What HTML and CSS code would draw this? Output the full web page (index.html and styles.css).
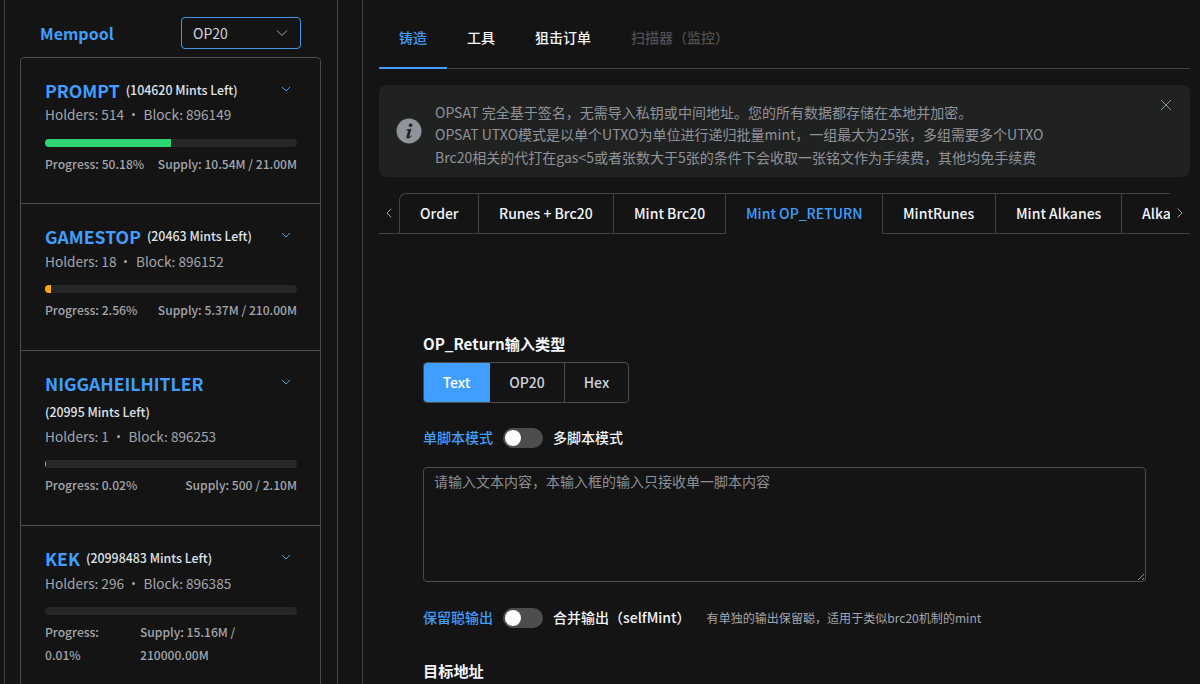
FILE: index.html
```html
<!DOCTYPE html>
<html lang="zh-CN">
<head>
  <meta charset="UTF-8">
  <meta name="viewport" content="width=device-width, initial-scale=1.0">
  <title>OPSAT</title>
  <link rel="stylesheet" href="styles.css">
</head>
<body>
  <aside class="sidebar">
    <div class="sidebar-header">
      <h1>Mempool</h1>
      <div class="select">
        <span>OP20</span>
        <svg class="select-arrow" width="12" height="12" viewBox="0 0 12 12"><path d="M1 3.5 L6 8.5 L11 3.5"/></svg>
      </div>
    </div>

    <div class="token-list">
      <div class="token">
        <div class="token-title">
          <div class="token-names"><span class="token-name">PROMPT</span><span class="mints">(104620 Mints Left)</span></div>
          <svg class="arrow" width="10" height="10" viewBox="0 0 10 10"><path d="M1 3 L5 7 L9 3"/></svg>
        </div>
        <div class="token-info"><span>Holders: 514</span><span class="dot"></span><span>Block: 896149</span></div>
        <div class="progress"><div class="bar green" style="width: 50.18%"></div></div>
        <div class="token-stats"><span>Progress: 50.18%</span><span>Supply: 10.54M / 21.00M</span></div>
      </div>

      <div class="token">
        <div class="token-title">
          <div class="token-names"><span class="token-name">GAMESTOP</span><span class="mints">(20463 Mints Left)</span></div>
          <svg class="arrow" width="10" height="10" viewBox="0 0 10 10"><path d="M1 3 L5 7 L9 3"/></svg>
        </div>
        <div class="token-info"><span>Holders: 18</span><span class="dot"></span><span>Block: 896152</span></div>
        <div class="progress"><div class="bar" style="width: 2.56%"></div></div>
        <div class="token-stats"><span>Progress: 2.56%</span><span>Supply: 5.37M / 210.00M</span></div>
      </div>

      <div class="token">
        <div class="token-title">
          <div class="token-names"><span class="token-name">NIGGAHEILHITLER</span><span class="mints">(20995 Mints Left)</span></div>
          <svg class="arrow" width="10" height="10" viewBox="0 0 10 10"><path d="M1 3 L5 7 L9 3"/></svg>
        </div>
        <div class="token-info"><span>Holders: 1</span><span class="dot"></span><span>Block: 896253</span></div>
        <div class="progress"><div class="bar" style="width: 0.2%"></div></div>
        <div class="token-stats"><span>Progress: 0.02%</span><span>Supply: 500 / 2.10M</span></div>
      </div>

      <div class="token">
        <div class="token-title">
          <div class="token-names"><span class="token-name">KEK</span><span class="mints">(20998483 Mints Left)</span></div>
          <svg class="arrow" width="10" height="10" viewBox="0 0 10 10"><path d="M1 3 L5 7 L9 3"/></svg>
        </div>
        <div class="token-info"><span>Holders: 296</span><span class="dot"></span><span>Block: 896385</span></div>
        <div class="progress"><div class="bar" style="width: 0.01%"></div></div>
        <div class="token-stats wrapped"><span>Progress: 0.01%</span><span>Supply: 15.16M / 210000.00M</span></div>
      </div>
    </div>
  </aside>

  <main class="main">
    <nav class="menu">
      <a class="menu-item active">铸造</a>
      <a class="menu-item">工具</a>
      <a class="menu-item">狙击订单</a>
      <a class="menu-item disabled">扫描器（监控）</a>
    </nav>

    <div class="alert">
      <svg class="alert-icon" width="26" height="26" viewBox="0 0 26 26">
        <circle cx="13" cy="13" r="12.5" fill="#909399"/>
        <circle cx="14.6" cy="7.2" r="1.8" fill="#202121"/>
        <path d="M10.3 11.4 L15.4 10.8 L13.4 18 Q13.2 19 14 18.6 L15.4 17.5 L15.8 18 Q13.6 20.6 11.6 20.5 Q10 20.3 10.5 18.4 L12.1 12.7 L10.2 12.2 Z" fill="#202121"/>
      </svg>
      <div class="alert-text">
        <p>OPSAT 完全基于签名，无需导入私钥或中间地址。您的所有数据都存储在本地并加密。</p>
        <p>OPSAT UTXO模式是以单个UTXO为单位进行递归批量mint，一组最大为25张，多组需要多个UTXO</p>
        <p>Brc20相关的代打在gas&lt;5或者张数大于5张的条件下会收取一张铭文作为手续费，其他均免手续费</p>
      </div>
      <svg class="alert-close" width="12" height="12" viewBox="0 0 12 12"><path d="M1 1 L11 11 M11 1 L1 11"/></svg>
    </div>

    <div class="tabs">
      <div class="tab-nav prev"><svg width="6" height="10" viewBox="0 0 6 10"><path d="M5.3 0.7 L1 5 L5.3 9.3"/></svg></div>
      <div class="tab-list">
        <div class="tab w-order">Order</div>
        <div class="tab w-runes">Runes + Brc20</div>
        <div class="tab w-brc">Mint Brc20</div>
        <div class="tab w-op active">Mint OP_RETURN</div>
        <div class="tab w-mint">MintRunes</div>
        <div class="tab w-alk">Mint Alkanes</div>
        <div class="tab w-last">Alka</div>
      </div>
      <div class="tab-nav next"><svg width="6" height="10" viewBox="0 0 6 10"><path d="M0.7 0.7 L5 5 L0.7 9.3"/></svg></div>
    </div>

    <form class="form">
      <label class="form-label">OP_Return输入类型</label>
      <div class="radio-group">
        <div class="radio r-text active">Text</div>
        <div class="radio r-op">OP20</div>
        <div class="radio r-hex">Hex</div>
      </div>

      <div class="switch-row">
        <span class="switch-label active">单脚本模式</span>
        <span class="switch"></span>
        <span class="switch-label">多脚本模式</span>
      </div>

      <textarea class="textarea" placeholder="请输入文本内容，本输入框的输入只接收单一脚本内容"></textarea>

      <div class="switch-row second">
        <span class="switch-label active">保留聪输出</span>
        <span class="switch"></span>
        <span class="switch-label">合并输出（selfMint）</span>
        <span class="hint">有单独的输出保留聪，适用于类似brc20机制的mint</span>
      </div>

      <label class="form-label address">目标地址</label>
    </form>
  </main>
</body>
</html>
```
FILE: styles.css
```css
* {
  margin: 0;
  padding: 0;
  box-sizing: border-box;
}

body {
  font-family: "Noto Sans CJK SC", sans-serif;
  font-size: 14px;
  color: #f2f5fa;
  background-color: #141414;
  display: flex;
  height: 684px;
  overflow: hidden;
}

svg {
  display: block;
  flex-shrink: 0;
  fill: none;
}

/* Sidebar */
.sidebar {
  width: 334px;
  height: 684px;
  margin-left: 4px;
  padding: 17px 17px 0 15px;
  border-left: 1px solid #414243;
  border-right: 1px solid #414243;
  flex-shrink: 0;
  overflow: hidden;
}

.sidebar-header {
  display: flex;
  justify-content: space-between;
  align-items: center;
  height: 32px;
  padding: 0 19px 0 20px;
  margin-bottom: 8px;
}

.sidebar-header h1 {
  font-size: 16px;
  font-weight: 700;
  line-height: 32px;
  color: #409eff;
}

.select {
  display: flex;
  justify-content: space-between;
  align-items: center;
  width: 120px;
  height: 32px;
  padding: 0 12px 0 11px;
  border: 1px solid #4596ea;
  border-radius: 4px;
  line-height: 30px;
  color: #cfd3dc;
}

.select-arrow path {
  stroke: #a3a6ad;
}

.token-list {
  width: 301px;
  border: 1px solid #4c4d4f;
  border-radius: 4px 4px 0 0;
}

.token {
  padding: 18px 23px 28.4px 24px;
  border-bottom: 1px solid #4c4d4f;
}

.token-title {
  display: flex;
  justify-content: space-between;
}

.token-names {
  display: flex;
  flex-wrap: wrap;
  column-gap: 6px;
  width: 220px;
}

.token-name,
.mints {
  line-height: 29.2px;
}

.token-name {
  font-size: 17.6px;
  font-weight: 700;
  color: #409eff;
}

.mints {
  font-size: 12.4px;
  font-weight: 500;
  color: #dfe2e8;
}

.arrow {
  margin: 8px 6px 0 0;
}

.arrow path {
  stroke: #409eff;
}

.token-info {
  display: flex;
  align-items: center;
  height: 19px;
  font-size: 13.6px;
  line-height: 19px;
  color: #a3a6ad;
}

.dot {
  width: 3px;
  height: 3px;
  margin: 0 8.5px 0 8px;
  border-radius: 50%;
  background-color: #a3a6ad;
}

.progress {
  height: 8px;
  margin-top: 14.3px;
  border-radius: 4px;
  background-color: #262727;
  overflow: hidden;
}

.bar {
  height: 100%;
  background-color: #faa613;
}

.bar.green {
  background-color: #2ed573;
}

.token-stats {
  display: flex;
  justify-content: space-between;
  margin-top: 5px;
  font-size: 12.1px;
  font-weight: 500;
  line-height: 23.5px;
  color: #a3a6ad;
}

.token-stats.wrapped {
  display: grid;
  grid-template-columns: 95px 110px;
  justify-content: start;
}

.token-stats.wrapped span:first-child {
  width: 60px;
}

/* Main panel */
.main {
  flex: 1;
  height: 684px;
  margin-left: 24px;
  padding: 8px 10px 0 16px;
  border-left: 1px solid #414243;
  overflow: hidden;
}

.menu {
  display: flex;
  height: 61px;
  border-bottom: 1px solid #414243;
}

.menu-item {
  height: 61px;
  padding: 0 20px;
  line-height: 58px;
  font-weight: 500;
}

.menu-item.active {
  color: #409eff;
  border-bottom: 2px solid #409eff;
}

.menu-item.disabled {
  color: #4f5053;
}

.alert {
  display: flex;
  align-items: center;
  height: 92px;
  margin-top: 16px;
  padding: 0 18px 0 17px;
  border-radius: 8px;
  background-color: #202121;
}

.alert-text {
  flex: 1;
  margin-left: 13px;
  padding-top: 7px;
  font-size: 14.03px;
  line-height: 22.4px;
  color: #909399;
  white-space: nowrap;
}

.alert-close {
  align-self: flex-start;
  margin-top: 14px;
}

.alert-close path {
  stroke: #909399;
}

.tabs {
  display: flex;
  height: 41px;
  margin-top: 16px;
}

.tab-nav {
  display: flex;
  align-items: center;
  justify-content: center;
  width: 20px;
  border-bottom: 1px solid #414243;
}

.tab-nav path {
  stroke: #a3a6ad;
}

.tab-list {
  flex: 1;
  min-width: 0;
  display: flex;
  border-top: 1px solid #414243;
  border-left: 1px solid #414243;
  border-radius: 7px 0 0 0;
  overflow: hidden;
}

.tab {
  flex-shrink: 0;
  padding-left: 20px;
  border-right: 1px solid #414243;
  border-bottom: 1px solid #414243;
  line-height: 38px;
  font-weight: 500;
  white-space: nowrap;
}

.tab.active {
  color: #409eff;
  border-bottom-color: transparent;
}

.w-order { width: 79px; }
.w-runes { width: 135px; }
.w-brc { width: 112px; }
.w-op { width: 157px; }
.w-mint { width: 113px; }
.w-alk { width: 126px; }
.w-last { width: 100px; }

/* Form */
.form {
  padding: 97px 44px 0 44px;
}

.form-label {
  display: block;
  font-size: 15.2px;
  font-weight: 700;
  line-height: 24px;
}

.radio-group {
  display: flex;
  width: 206px;
  height: 41px;
  margin-top: 7px;
  border: 1px solid #4c4d4f;
  border-radius: 4px;
  overflow: hidden;
}

.radio {
  text-align: center;
  line-height: 39px;
  font-weight: 500;
  color: #cfd3dc;
  border-right: 1px solid #4c4d4f;
}

.radio:last-child {
  border-right: none;
}

.radio.active {
  margin: -1px 0 -1px -1px;
  line-height: 41px;
  color: #fff;
  background-color: #409eff;
  border: none;
}

.r-text { width: 67px; }
.r-op { width: 75px; }
.r-hex { width: 63px; }

.switch-row {
  display: flex;
  align-items: center;
  height: 32px;
  margin-top: 19px;
}

.switch-label {
  padding-bottom: 2px;
  font-weight: 500;
  line-height: 20px;
}

.switch-label.active {
  color: #409eff;
}

.switch {
  width: 40px;
  height: 20px;
  margin: 0 10px;
  padding: 2px;
  border-radius: 10px;
  background-color: #4c4d4f;
}

.switch::before {
  content: "";
  display: block;
  width: 16px;
  height: 16px;
  border-radius: 50%;
  background-color: #fff;
}

.textarea {
  display: block;
  width: 723px;
  height: 115px;
  margin-top: 13px;
  padding: 3px 11px 5px 10px;
  border: 1px solid #4c4d4f;
  border-radius: 4px;
  outline: none;
  background-color: transparent;
  font-family: inherit;
  font-size: 14px;
  line-height: 21px;
  color: #cfd3dc;
  resize: vertical;
}

.textarea::placeholder {
  color: #8d9095;
}

.switch-row.second {
  margin-top: 20px;
}

.hint {
  margin-left: 16px;
  padding-bottom: 1px;
  font-size: 12.05px;
  color: #a3a6ad;
}

.form-label.address {
  margin-top: 24px;
}
```
